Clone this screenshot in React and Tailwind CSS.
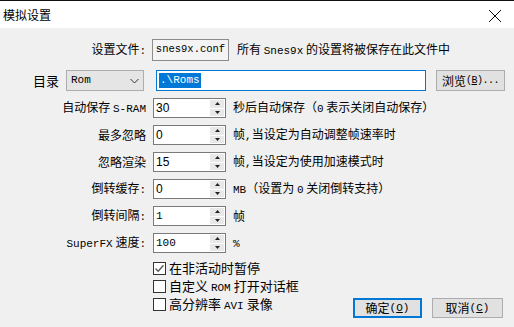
import React from 'react';

function L({ children }) {
  return <span className="font-['Liberation_Mono',monospace] text-[11px]">{children}</span>;
}

function Spin({ value, mono }) {
  return (
    <div className="flex h-[20px] w-[73px] border border-[#7a7a7a] bg-white">
      <div
        className={
          mono
            ? "flex-1 pl-[2px] font-['Liberation_Mono',monospace] text-[11px] leading-[18px] text-black"
            : "flex-1 pl-[2px] font-['Liberation_Sans',sans-serif] text-[12px] leading-[18px] text-black"
        }
      >
        {value}
      </div>
      <div className="my-[1px] mr-[1px] flex w-[14px] flex-col gap-[1px]">
        <div className="flex flex-1 items-center justify-center bg-[#e8e8e8]">
          <svg width="5" height="3" viewBox="0 0 5 3"><path d="M2.5 0 L5 3 L0 3 Z" fill="#222" /></svg>
        </div>
        <div className="flex flex-1 items-center justify-center bg-[#e8e8e8]">
          <svg width="5" height="3" viewBox="0 0 5 3"><path d="M0 0 L5 0 L2.5 3 Z" fill="#222" /></svg>
        </div>
      </div>
    </div>
  );
}

function SpinRow({ label, value, mono, suffix }) {
  return (
    <div className="flex h-[20px] items-center">
      <div className="w-[146px] text-right whitespace-nowrap">{label}</div>
      <div className="ml-[7px]">
        <Spin value={value} mono={mono} />
      </div>
      <div className="ml-[7px] whitespace-nowrap">{suffix}</div>
    </div>
  );
}

function Check({ checked, children }) {
  return (
    <div className="flex h-[18px] items-center">
      <div className="flex h-[13px] w-[13px] items-center justify-center border border-[#333] bg-white">
        {checked && (
          <svg width="11" height="11" viewBox="0 0 11 11">
            <path d="M1.5 5.5 L4.2 8.2 L9.5 2.2" stroke="#555" strokeWidth="1.3" fill="none" />
          </svg>
        )}
      </div>
      <div className="ml-[3px] whitespace-nowrap text-[13px]">{children}</div>
    </div>
  );
}

export default function App() {
  const spins = [
    { label: <>自动保存 <L>S-RAM</L></>, value: '30', suffix: <>秒后自动保存（<L>0</L> 表示关闭自动保存）</> },
    { label: '最多忽略', value: '0', suffix: <>帧<L>,</L>当设定为自动调整帧速率时</> },
    { label: '忽略渲染', value: '15', suffix: <>帧<L>,</L>当设定为使用加速模式时</> },
    { label: <>倒转缓存<L>:</L></>, value: '0', suffix: <><L>MB</L>（设置为 <L>0</L> 关闭倒转支持）</> },
    { label: <>倒转间隔<L>:</L></>, value: '1', mono: true, suffix: '帧' },
    { label: <><L>SuperFX</L> 速度<L>:</L></>, value: '100', mono: true, suffix: <L>%</L> },
  ];

  return (
    <div className="flex h-[327px] w-[514px] flex-col overflow-hidden border-t border-[#111] bg-[#f0f0f0] font-['Noto_Sans_CJK_SC',sans-serif] text-[12px] text-black">
      <div className="flex h-[27px] shrink-0 items-center justify-between bg-white pl-[3px] pr-[12px]">
        <span className="text-[12px]">模拟设置</span>
        <svg width="14" height="14" viewBox="0 0 14 14" className="mt-[2px]">
          <path d="M1 1 L13 13 M13 1 L1 13" stroke="#111" strokeWidth="1" />
        </svg>
      </div>

      <div className="flex flex-col pt-[11px]">
        <div className="flex h-[22px] items-center">
          <div className="w-[146px] text-right">设置文件<L>:</L></div>
          <div className="ml-[6px] flex h-[22px] w-[77px] items-center justify-center border border-[#8c8c8c] bg-[#f4f4f4]">
            <span className="font-['Liberation_Mono',monospace] text-[10.5px]">snes9x.conf</span>
          </div>
          <div className="ml-[8px] whitespace-nowrap">所有 <L>Snes9x</L> 的设置将被保存在此文件中</div>
        </div>

        <div className="mt-[9px] flex h-[21px] items-center">
          <div className="pl-[33px] text-[13px]">目录</div>
          <div className="ml-[7px] flex h-[21px] w-[78px] items-center justify-between border border-[#adadad] bg-[#e5e5e5] pl-[4px] pr-[4px]">
            <span className="font-['Liberation_Mono',monospace] text-[11px]">Rom</span>
            <svg width="9" height="6" viewBox="0 0 9 6"><path d="M0.5 1 L4.5 5 L8.5 1" stroke="#333" strokeWidth="1" fill="none" /></svg>
          </div>
          <div className="ml-[12px] flex h-[21px] w-[270px] items-center border border-[#0078d7] bg-white pl-[2px]">
            <span className="bg-[#0078d7] px-[1px] font-['Liberation_Mono',monospace] text-[11px] leading-[15px] text-white">.\Roms</span>
          </div>
          <div className="ml-[10px] flex h-[21px] w-[69px] items-center justify-center border border-[#adadad] bg-[#e1e1e1] whitespace-nowrap">
            浏览<span className="font-['Liberation_Mono',monospace] text-[10px] tracking-[-0.5px]">(<span className="underline">B</span>)...</span>
          </div>
        </div>

        <div className="mt-[7px] flex flex-col gap-[7px]">
          {spins.map((s, i) => (
            <SpinRow key={i} label={s.label} value={s.value} mono={s.mono} suffix={s.suffix} />
          ))}
        </div>

        <div className="mt-[6px] flex flex-col pl-[153px]">
          <Check checked>在非活动时暂停</Check>
          <Check>自定义 <L>ROM</L> 打开对话框</Check>
          <div className="flex items-start">
            <Check>高分辨率 <L>AVI</L> 录像</Check>
            <div className="ml-auto mr-[11px] mt-[3px] flex gap-[10px]">
              <div className="flex h-[20px] w-[69px] items-center justify-center border-2 border-[#0078d7] bg-[#e1e1e1]">
                确定<L>(<span className="underline">O</span>)</L>
              </div>
              <div className="flex h-[20px] w-[71px] items-center justify-center border border-[#adadad] bg-[#e1e1e1]">
                取消<L>(<span className="underline">C</span>)</L>
              </div>
            </div>
          </div>
        </div>
      </div>
    </div>
  );
}
